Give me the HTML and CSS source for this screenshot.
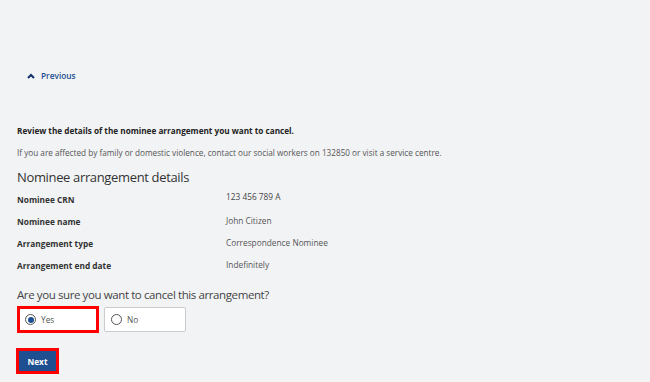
FILE: index.html
```html
<!DOCTYPE html>
<html lang="en">
<head>
  <meta charset="UTF-8">
  <meta name="viewport" content="width=device-width, initial-scale=1.0">
  <title>Cancel nominee arrangement</title>
  <link rel="stylesheet" href="styles.css">
</head>
<body>
  <div class="page">
    <a class="back-link" href="#">
      <svg class="back-link__icon" width="8" height="6" viewBox="0 0 8 6">
        <path d="M1 5 L4 2 L7 5" fill="none" stroke="currentColor" stroke-width="2"/>
      </svg>
      Previous
    </a>

    <p class="intro">Review the details of the nominee arrangement you want to cancel.</p>
    <p class="note">If you are affected by family or domestic violence, contact our social workers on 132850 or visit a service centre.</p>

    <h2 class="section-title">Nominee arrangement details</h2>

    <dl class="details">
      <div class="details__row">
        <dt>Nominee CRN</dt>
        <dd class="details__value--up">123 456 789 A</dd>
      </div>
      <div class="details__row">
        <dt>Nominee name</dt>
        <dd>John Citizen</dd>
      </div>
      <div class="details__row">
        <dt>Arrangement type</dt>
        <dd>Correspondence Nominee</dd>
      </div>
      <div class="details__row">
        <dt>Arrangement end date</dt>
        <dd>Indefinitely</dd>
      </div>
    </dl>

    <fieldset class="question">
      <legend class="question__title">Are you sure you want to cancel this arrangement?</legend>
      <div class="choices">
        <label class="choice choice--error">
          <span class="radio radio--checked"></span>
          Yes
        </label>
        <label class="choice">
          <span class="radio"></span>
          No
        </label>
      </div>
    </fieldset>

    <button class="btn-next" type="button">Next</button>
  </div>
</body>
</html>
```

FILE: styles.css
```css
:root {
  --clr-bg: #f2f3f5;
  --clr-blue: #1d4f91;
  --clr-text: #333;
  --clr-muted: #555;
  --clr-red: #ff0000;

  font-family: "Open Sans", "Noto Sans", sans-serif;
}

* {
  box-sizing: border-box;
}

body {
  margin: 0;
  background: var(--clr-bg);
  color: var(--clr-text);
}

.page {
  padding: 70px 17px 0;
  display: flex;
  flex-direction: column;
  align-items: flex-start;
}

.back-link {
  display: flex;
  align-items: center;
  gap: 6px;
  margin-left: 10px;
  font-size: 8.3px;
  font-weight: 600;
  color: var(--clr-blue);
  text-decoration: none;
}

.back-link__icon {
  color: #10306a;
}

.intro {
  margin: 44px 0 0;
  font-size: 8.2px;
  font-weight: 700;
  color: #222;
}

.note {
  margin: 11px 0 0;
  font-size: 8.2px;
  color: var(--clr-muted);
}

.section-title {
  margin: 10px 0 0;
  font-size: 13px;
  letter-spacing: -0.35px;
  font-weight: 400;
  color: #333;
}

.details {
  margin: 2px 0 0;
}

.details__row {
  display: flex;
  height: 22px;
  align-items: center;
}

.details dt {
  width: 209px;
  font-size: 8.3px;
  font-weight: 700;
  color: #333;
}

.details dd {
  margin: 0 0 2px;
  font-size: 8.3px;
  color: var(--clr-muted);
}

.details .details__value--up {
  margin-bottom: 5px;
  color: #444;
}

.question {
  margin: 11px 0 0;
  padding: 0;
  border: 0;
}

.question__title {
  padding: 0;
  font-size: 11.5px;
  letter-spacing: -0.4px;
  color: #444;
}

.choices {
  display: flex;
  gap: 5px;
  margin-top: 5px;
}

.choice {
  display: flex;
  align-items: center;
  gap: 5px;
  width: 82px;
  height: 25px;
  padding-left: 6px;
  background: #fff;
  border: 1px solid #ccc;
  border-radius: 2px;
  font-size: 8.3px;
  color: #555;
}

.choice--error {
  border: 3px solid var(--clr-red);
  border-radius: 0;
  height: 27px;
  margin-top: -1px;
  padding-left: 5px;
}

.radio {
  width: 11px;
  height: 11px;
  border: 1px solid #555;
  border-radius: 50%;
  background: #fff;
  display: flex;
  align-items: center;
  justify-content: center;
}

.radio--checked::after {
  content: '';
  width: 6px;
  height: 6px;
  border-radius: 50%;
  background: var(--clr-blue);
}

.btn-next {
  margin-top: 15px;
  margin-left: -1px;
  width: 43px;
  height: 26px;
  padding: 0;
  background: var(--clr-blue);
  border: 3px solid var(--clr-red);
  font-family: inherit;
  font-size: 8.3px;
  font-weight: 700;
  color: #fff;
}
```
